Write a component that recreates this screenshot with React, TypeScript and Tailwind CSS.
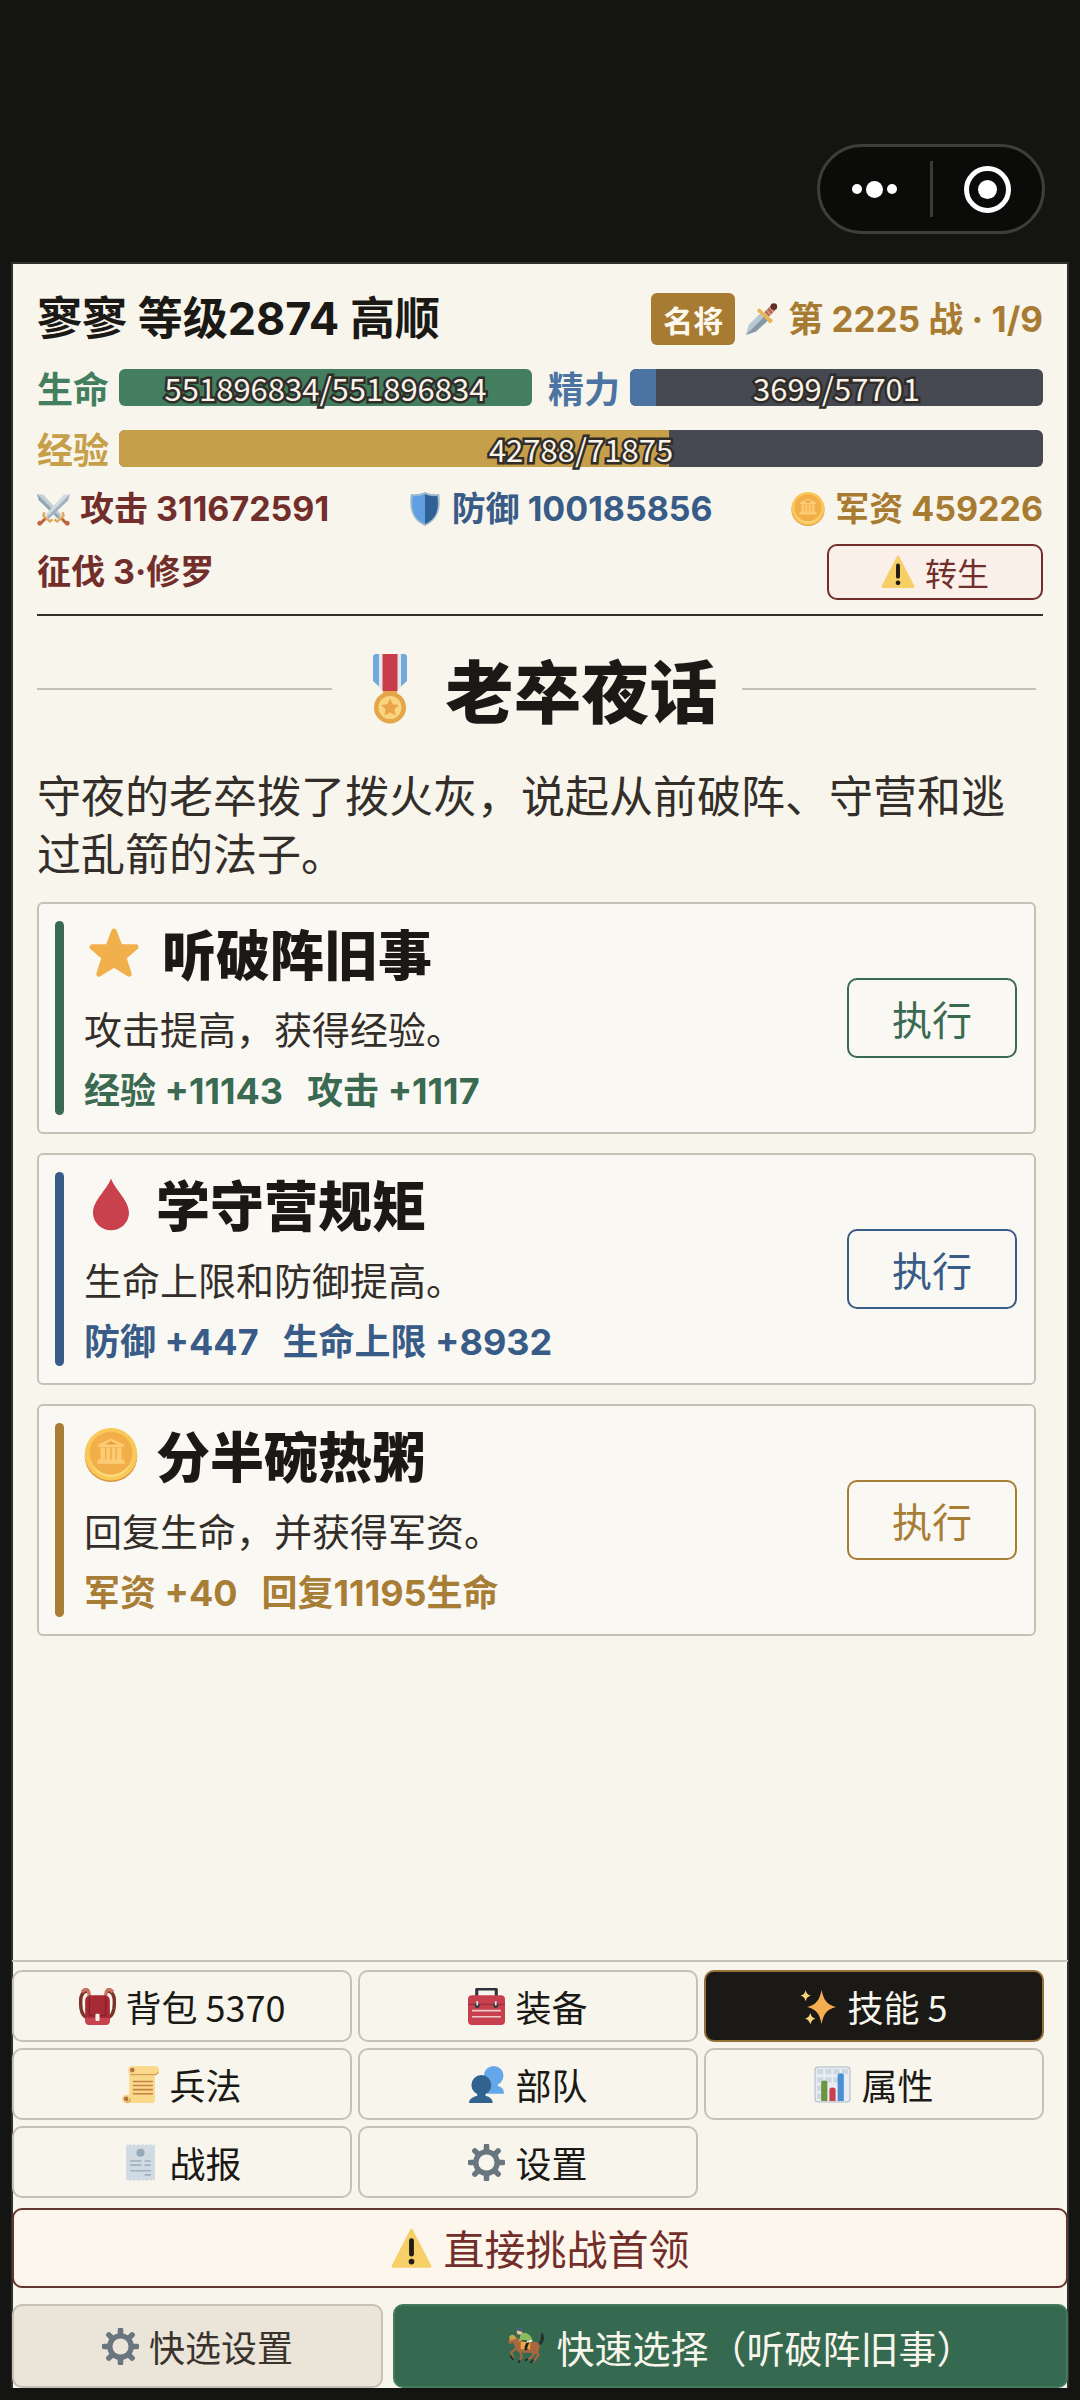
import React from 'react'
import clsx from 'clsx'

type IconProps = { className?: string }

const Svg: React.FC<IconProps & { viewBox?: string; children: React.ReactNode }> = ({
  className,
  viewBox = '0 0 36 36',
  children
}) => (
  <svg viewBox={viewBox} className={clsx('shrink-0', className)} aria-hidden="true">
    {children}
  </svg>
)

const DaggerIcon: React.FC<IconProps> = ({ className }) => (
  <Svg className={className}>
    <path d="M1 35 4 24 17 11l8 8-13 12z" fill="#b9c7d1" />
    <path d="M1 35 21 15l4 4-13 12z" fill="#8698a5" />
    <path d="m21 10 7-7 5 5-7 7z" fill="#b5695a" />
    <path d="m24 8 4 5M27 5l4 5" stroke="#e0a07a" strokeWidth="1.6" />
    <circle cx="31.5" cy="4" r="3.6" fill="#5f2f28" />
    <path d="M14 7c1-2 3-1 4 1l10 9c3 1 3 3 1 4-2 2-3 1-4-1l-9-9c-3-1-3-3-2-4z" fill="#e7b552" />
  </Svg>
)

const SwordsIcon: React.FC<IconProps> = ({ className }) => (
  <Svg className={className}>
    <path d="m0 1 7 1 20 22-4 4L2 8z" fill="#c3ced6" />
    <path d="m0 1 25 25-2 2L2 8z" fill="#93a4b0" />
    <path d="m36 1-7 1L9 24l4 4L34 8z" fill="#d2dbe1" />
    <path d="M36 1 11 26l2 2L34 8z" fill="#a3b2bd" />
    <path d="m26 27 6 6M10 27l-6 6" stroke="#b5643f" strokeWidth="3.4" />
    <path d="m28 21 1 4-7 6-3-2M8 21l-1 4 7 6 3-2" fill="none" stroke="#dfa95a" strokeWidth="2.6" />
    <circle cx="33" cy="33" r="2.6" fill="#c4613f" />
    <circle cx="3" cy="33" r="2.6" fill="#c4613f" />
  </Svg>
)

const ShieldIcon: React.FC<IconProps> = ({ className }) => (
  <Svg className={className}>
    <path d="M18 0c5 2 10 3 15 2 2 14 0 27-15 34C3 29 1 16 3 2c5 1 10 0 15-2z" fill="#9fb9cf" />
    <path d="M18 2C13 4 9 5 5 4c-2 13 0 24 13 30z" fill="#5f9fe2" />
    <path d="M18 2c5 2 9 3 13 2 2 13 0 24-13 30z" fill="#2f6194" />
  </Svg>
)

const CoinIcon: React.FC<IconProps> = ({ className }) => (
  <Svg className={className}>
    <ellipse cx="18" cy="19" rx="17.500" ry="17" fill="#dc9440" />
    <ellipse cx="18" cy="17.500" rx="17.500" ry="17.500" fill="#f9c859" />
    <ellipse cx="18" cy="17.800" rx="14.400" ry="14.800" fill="#fbdc80" />
    <ellipse cx="18" cy="16.800" rx="14.400" ry="14.300" fill="#f2ae49" />
    <path d="m18 7 8.500 4v1.600h-17V11zM11 13h3v8h-3zM15 13h2.400v8H15zM18.600 13H21v8h-2.400zM22 13h3v8h-3zM9.500 21h17l1 2.800h-19z" fill="#fdcb74" />
    <path d="m18 8.600 4 2.400h-8z" fill="#e99f3f" />
  </Svg>
)

const WarningIcon: React.FC<IconProps> = ({ className }) => (
  <Svg className={className}>
    <path d="M16.800 1.600q1.200-2 2.400 0l16 31q1 2.400-1.400 2.400H2.200q-2.400 0-1.400-2.400z" fill="#f6cf67" />
    <rect x="15.900" y="9" width="4.200" height="16" rx="2" fill="#211d16" />
    <circle cx="18" cy="29.500" r="2.500" fill="#211d16" />
  </Svg>
)

const MedalIcon: React.FC<IconProps> = ({ className }) => (
  <Svg className={className} viewBox="0 0 36 72">
    <path d="M4 1h28q3 0 3 3v24L24 38H12L1 28V4q0-3 3-3z" fill="#71a9dc" />
    <path d="M7 1h22v33l-5 4H12l-5-4z" fill="#e5e6ec" />
    <path d="M10.500 1h15v37h-15z" fill="#c83d49" />
    <path d="M11 38h14v7H11z" fill="#e6a548" />
    <circle cx="18" cy="54.500" r="16" fill="#e6a548" />
    <circle cx="18" cy="54.500" r="11.500" fill="#fad581" />
    <path d="m18 45.500 2.700 5.700 6.300.8-4.600 4.300 1.200 6.200-5.600-3-5.600 3 1.200-6.200L9 52l6.300-.8z" fill="#eba449" />
  </Svg>
)

const StarIcon: React.FC<IconProps> = ({ className }) => (
  <Svg className={className}>
    <path
      d="m18 3.500 4 10.500h10.500l-8 7 3.500 11-10-6.200L8 32l3.500-11-8-7H14z"
      fill="#f2b04d"
      stroke="#f2b04d"
      strokeWidth="3.600"
      strokeLinejoin="round"
    />
  </Svg>
)

const DropIcon: React.FC<IconProps> = ({ className }) => (
  <Svg className={className}>
    <path d="M18 1c3 8 12 14.500 12 23A12 11.500 0 0 1 6 24C6 15.500 15 9 18 1z" fill="#c8414d" />
  </Svg>
)

const BackpackIcon: React.FC<IconProps> = ({ className }) => (
  <Svg className={className}>
    <path d="M9 3C1 3 1 12 2 20c1 6 3 8 6 9M27 3c8 0 8 9 7 17-1 6-3 8-6 9" fill="none" stroke="#7b3428" strokeWidth="3.400" />
    <path d="M10 9c0-9-4-9-7-5M26 9c0-9 4-9 7-5" fill="none" stroke="#c87462" strokeWidth="3.400" />
    <rect x="6" y="7" width="24" height="29" rx="5" fill="#a82a35" />
    <path d="M6 29h24v3q0 4-4 4H10q-4 0-4-4z" fill="#c8424e" />
    <path d="M10 9v15q0 3 3 3h10q3 0 3-3V9" fill="none" stroke="#82202b" strokeWidth="1.200" />
    <rect x="16" y="25" width="4" height="7" rx="1" fill="#f3eee9" />
  </Svg>
)

const ToolboxIcon: React.FC<IconProps> = ({ className }) => (
  <Svg className={className}>
    <path d="M8.500 9V2q0-1 1-1h17q1 0 1 1v7" fill="none" stroke="#2c3338" strokeWidth="3" />
    <rect y="7" width="36" height="29" rx="4" fill="#c8404d" />
    <path d="M0 16h36" stroke="#97303c" strokeWidth="1.200" />
    <path d="M4 22h28M4 28h28" stroke="#f0c9cb" strokeWidth="1.600" />
    <circle cx="9" cy="17" r="2.400" fill="#2c3338" />
    <circle cx="27" cy="17" r="2.400" fill="#2c3338" />
    <path d="M9 13v4M27 13v4" stroke="#dfe4e8" strokeWidth="1.800" />
  </Svg>
)

const SparklesIcon: React.FC<IconProps> = ({ className }) => (
  <Svg className={className}>
    <path d="M21 2c2 10 5 14 14 16.500C26 21 23 25 21 35c-2-10-5-14-14-16.500C16 16 19 12 21 2z" fill="#f5ae4f" />
    <path d="M5.500 2c.8 3.400 2 4.600 5 5.500-3 .9-4.200 2-5 5.500C4.700 9.500 3.500 8.400.5 7.500c3-.9 4.200-2.100 5-5.500zM10 24c.8 3.400 2 4.800 5 5.800-3 1-4.200 2.400-5 5.800-.8-3.400-2-4.800-5-5.800 3-1 4.200-2.400 5-5.800z" fill="#f8d37a" />
  </Svg>
)

const ScrollIcon: React.FC<IconProps> = ({ className }) => (
  <Svg className={className}>
    <path d="M6 4q0-4 4-4h22q4 0 4 4t-4 5v24q0 3-3 3H4q-4 0-4-4t4-4h3V8Q6 7 6 4z" fill="#fbd98b" />
    <path d="M8 8.500h24q3-.5 3-3M4 35.500q4 0 4-4" fill="none" stroke="#d89c57" strokeWidth="1.200" />
    <circle cx="10" cy="4" r="2.300" fill="#b4714a" />
    <circle cx="4" cy="32" r="2.300" fill="#b4714a" />
    <path d="M10.500 15H30M10.500 19H30M10.500 23H30M10.500 27H30" stroke="#c57f45" strokeWidth="1.500" />
  </Svg>
)

const PeopleIcon: React.FC<IconProps> = ({ className }) => (
  <Svg className={className}>
    <path d="M21 16h8v3.500c4 1 6 3 6 7.500H18z" fill="#64a6ea" />
    <circle cx="25" cy="9.500" r="9.500" fill="#64a6ea" />
    <circle cx="13" cy="18.500" r="9.700" fill="#32628f" />
    <path d="M9 24h8v5c4 1 7 3 7 7H1c0-4 4-6 8-7z" fill="#32628f" />
  </Svg>
)

const ChartIcon: React.FC<IconProps> = ({ className }) => (
  <Svg className={className}>
    <rect x="1" y="1" width="34" height="34" rx="3" fill="#e7edf2" stroke="#aebac4" />
    <path d="M3 3h6v5H3zM11 3h6v5h-6zM19 3h6v5h-6zM27 3h6v5h-6zM3 11h6v5H3zM11 11h6v5h-6zM19 11h6v5h-6zM3 19h6v5H3zM3 27h6v5H3z" fill="#ccd7e0" />
    <path d="M7 16q0-2 3-2t3 2v18H7z" fill="#6b953f" />
    <path d="M15 23q0-2 3-2t3 2v11h-6z" fill="#c8414f" />
    <path d="M23 9q0-2 3-2t3 2v25h-6z" fill="#4a8fd4" />
  </Svg>
)

const ReceiptIcon: React.FC<IconProps> = ({ className }) => (
  <Svg className={className}>
    <path d="m4 0 2 1.500L8 0l2 1.500L12 0l2 1.500L16 0l2 1.500L20 0l2 1.500L24 0l2 1.500L28 0l2 1.500L32 0v36l-2-1.500-2 1.500-2-1.500-2 1.500-2-1.500-2 1.500-2-1.500-2 1.500-2-1.500-2 1.500-2-1.500L8 36l-2-1.500L4 36z" fill="#cfdae3" />
    <circle cx="18" cy="8.500" r="4" fill="#96a9b8" />
    <path d="M8 16.500h11M22 16.500h6M8 20.500h11M22 20.500h6M8 26h20M22 30h6" stroke="#9fb0be" strokeWidth="1.600" />
  </Svg>
)

const GearIcon: React.FC<IconProps> = ({ className }) => (
  <Svg className={className}>
    <path d="M18 2v32M2 18h32M6.700 6.700l22.600 22.600M29.300 6.700 6.700 29.300" stroke="#69757f" strokeWidth="5.400" strokeLinecap="round" />
    <circle cx="18" cy="18" r="13" fill="#69757f" />
    <circle cx="18" cy="18" r="7.800" className="fill-[var(--hole)]" />
  </Svg>
)

const HorseIcon: React.FC<IconProps> = ({ className }) => (
  <Svg className={className}>
    <path d="M30 15c3-1 1-6 3-10 3 3 3 10-2 12z" fill="#24322a" />
    <path d="M8 9 5 8l-4 5 1 3 4-1c1 3 2 6 4 8 5 3 12 0 17 3l3-3c2-4 1-8-3-9l-10 1z" fill="#a8673f" />
    <path d="m9 20-5 4 2 6M12 22l2 6-2 4M27 23l3 3-5 7M24 23l1 4-5 4" fill="none" stroke="#a8673f" strokeWidth="2" />
    <path d="m3 27 3 4M12 31l-1 3M25 31l-3 3M20 30l-3 2" stroke="#26302a" strokeWidth="1.800" />
    <path d="M2 9c3-3 5-2 7 2l-6 2z" fill="#c9a24c" />
    <path d="M13 14h9v7h-9z" fill="#f0a540" />
    <path d="m17 12 3 2-2 5v3" fill="none" stroke="#1d2320" strokeWidth="2.600" />
    <path d="M13 7c4-3 9-1 11 5l-5 1-4-1-4 2z" fill="#8bbd5c" />
    <path d="m19 13 5-1v2l-6 1z" fill="#eef0e6" />
    <circle cx="12" cy="4.500" r="2.700" fill="#edc79b" />
    <path d="M9 3c0-4 6-4 6 0v2z" fill="#46617c" />
  </Svg>
)

type BarProps = {
  label: string
  value: number
  max: number
  labelClass: string
  fillClass: string
}

const StatBar: React.FC<BarProps> = ({ label, value, max, labelClass, fillClass }) => (
  <div className="flex items-center gap-2.5">
    <span className={clsx('text-[36px] leading-[37px] font-bold whitespace-nowrap', labelClass)}>{label}</span>
    <div className="relative h-[37px] flex-1">
      <div className="h-full overflow-hidden rounded-md bg-[#474952]">
        <div className={clsx('h-full', fillClass)} style={{ width: `${(value / max) * 100}%` }} />
      </div>
      <span className="absolute inset-0 text-center text-[31px] leading-[37px] text-[#f9f3e9] [-webkit-text-stroke:5px_#302d29] [paint-order:stroke_fill]">
        {value}/{max}
      </span>
    </div>
  </div>
)

const events = [
  {
    title: '听破阵旧事',
    desc: '攻击提高，获得经验。',
    rewards: ['经验 +11143', '攻击 +1117'],
    icon: <StarIcon className="h-[54px] w-[60px]" />,
    bar: 'bg-[#3a6a51]',
    text: 'text-[#3a6a51]',
    border: 'border-[#3a6a51]'
  },
  {
    title: '学守营规矩',
    desc: '生命上限和防御提高。',
    rewards: ['防御 +447', '生命上限 +8932'],
    icon: <DropIcon className="size-[54px]" />,
    bar: 'bg-[#385b87]',
    text: 'text-[#385b87]',
    border: 'border-[#385b87]'
  },
  {
    title: '分半碗热粥',
    desc: '回复生命，并获得军资。',
    rewards: ['军资 +40', '回复11195生命'],
    icon: <CoinIcon className="size-[54px]" />,
    bar: 'bg-[#a87d36]',
    text: 'text-[#a87d36]',
    border: 'border-[#a87d36]'
  }
]

const menu = [
  { label: '背包 5370', Icon: BackpackIcon },
  { label: '装备', Icon: ToolboxIcon },
  { label: '技能 5', Icon: SparklesIcon, active: true },
  { label: '兵法', Icon: ScrollIcon },
  { label: '部队', Icon: PeopleIcon },
  { label: '属性', Icon: ChartIcon },
  { label: '战报', Icon: ReceiptIcon },
  { label: '设置', Icon: GearIcon }
]

export default function App() {
  return (
    <div className="flex min-h-screen flex-col bg-[#141412] px-[11px] pb-3 font-['Noto_Sans_CJK_SC',sans-serif] text-[#1a1916] [--hole:#f8f5ec]">
      {/* Mini program capsule */}
      <div className="flex justify-end pt-36 pr-6 pb-7">
        <div className="flex h-[90px] w-[228px] items-center rounded-full border-3 border-[#3d3d3b] bg-[#0b0b0a]">
          <button type="button" aria-label="更多" className="flex h-full flex-1 items-center justify-center gap-1">
            <span className="size-2.5 rounded-full bg-white" />
            <span className="size-[17px] rounded-full bg-white" />
            <span className="size-2.5 rounded-full bg-white" />
          </button>
          <span className="h-14 w-[3px] bg-[#3a3a39]" />
          <button type="button" aria-label="关闭" className="flex h-full flex-1 items-center justify-center">
            <span className="flex size-[47px] items-center justify-center rounded-full border-5 border-white">
              <span className="size-[19px] rounded-full bg-white" />
            </span>
          </button>
        </div>
      </div>

      <div className="flex flex-1 flex-col border-2 border-b-0 border-[#33302c] bg-[#f8f5ec]">
        <header className="mx-6 border-b-2 border-[#33302c] pt-[29px] pb-3.5">
          <div className="flex items-center justify-between">
            <h1 className="font-['Inter','Noto_Sans_CJK_SC',sans-serif] text-[45px] leading-[52px] font-bold">寥寥 等级2874 高顺</h1>
            <div className="flex items-center text-[#a87b32]">
              <span className="rounded-md bg-[#a87b32] px-3 text-[30px] leading-[52px] font-bold text-[#fdf8ee]">名将</span>
              <DaggerIcon className="ml-2.5 size-[33px]" />
              <span className="ml-2.5 font-['Inter','Noto_Sans_CJK_SC',sans-serif] text-[35px] leading-[52px] font-bold">第 2225 战 · 1/9</span>
            </div>
          </div>

          <div className="mt-6 grid grid-cols-2 gap-4">
            <StatBar label="生命" value={551896834} max={551896834} labelClass="text-[#437f5f]" fillClass="bg-[#437f5f]" />
            <StatBar label="精力" value={3699} max={57701} labelClass="text-[#4b74a3]" fillClass="bg-[#4b74a3]" />
          </div>
          <div className="mt-6">
            <StatBar label="经验" value={42788} max={71875} labelClass="text-[#c69f4a]" fillClass="bg-[#c69f4a]" />
          </div>

          <div className="mt-[18px] flex justify-between font-['Inter','Noto_Sans_CJK_SC',sans-serif] text-[34px] leading-[48px] font-bold">
            <span className="flex items-center gap-2.5 text-[#712e2b]">
              <SwordsIcon className="size-[33px]" />
              攻击 311672591
            </span>
            <span className="flex items-center gap-2.5 text-[#385b87]">
              <ShieldIcon className="size-[34px]" />
              防御 100185856
            </span>
            <span className="flex items-center gap-2.5 text-[#a87b32]">
              <CoinIcon className="size-[34px]" />
              军资 459226
            </span>
          </div>

          <div className="mt-[11px] flex items-center justify-between">
            <span className="font-['Inter','Noto_Sans_CJK_SC',sans-serif] text-[34px] leading-[48px] font-bold text-[#712e2b]">征伐 3·修罗</span>
            <button
              type="button"
              className="flex h-14 w-[216px] items-center justify-center gap-2.5 rounded-[10px] border-2 border-[#712e2b] bg-[#fbefe9] text-[32px] text-[#712e2b]"
            >
              <WarningIcon className="size-[34px]" />
              转生
            </button>
          </div>
        </header>

        <main className="flex-1 pr-[31px] pl-6">
          <div className="mt-[25px] flex items-center gap-6">
            <span className="h-0.5 flex-1 bg-[#c4c0b6]" />
            <h2 className="flex items-center gap-[38px] pl-4 text-[68px] leading-[96px] font-black">
              <MedalIcon className="h-[72px] w-9" />
              老卒夜话
            </h2>
            <span className="h-0.5 flex-1 bg-[#c4c0b6]" />
          </div>

          <p className="mt-7 text-[44px] leading-[58px] text-[#332e29]">
            守夜的老卒拨了拨火灰，说起从前破阵、守营和逃过乱箭的法子。
          </p>

          <div className="mt-[21px] space-y-[19px]">
            {events.map(event => (
              <section key={event.title} className="flex items-center rounded-md border-2 border-[#c6c1b6] bg-[#faf8f3] py-[17px] pr-[17px] pl-4">
                <span className={clsx('mr-5 w-[9px] self-stretch rounded-full', event.bar)} />
                <div className="flex-1">
                  <h3 className="flex items-center gap-[18px] text-[54px] leading-[64px] font-black">
                    {event.icon}
                    {event.title}
                  </h3>
                  <p className="mt-4 text-[38px] leading-[54px] text-[#332e29]">{event.desc}</p>
                  <p className={clsx("mt-3 flex gap-6 font-['Inter','Noto_Sans_CJK_SC',sans-serif] text-[36px] leading-[48px] font-bold", event.text)}>
                    {event.rewards.map(reward => (
                      <span key={reward}>{reward}</span>
                    ))}
                  </p>
                </div>
                <button
                  type="button"
                  className={clsx('h-20 w-[170px] rounded-[10px] border-2 text-[40px]', event.text, event.border)}
                >
                  执行
                </button>
              </section>
            ))}
          </div>
        </main>

        <footer className="-mx-px">
          <nav className="grid grid-cols-3 gap-1.5 border-t-2 border-[#c6c1b6] pt-2 pr-6">
            {menu.map(({ label, Icon, active }) => (
              <button
                key={label}
                type="button"
                className={clsx(
                  'flex h-[72px] items-center justify-center gap-2.5 rounded-[10px] border-2 text-[36px]',
                  active ? 'border-[#94703a] bg-[#1a1916] text-[#f8f5ec]' : 'border-[#c6c1b6] text-[#1a1916]'
                )}
              >
                <Icon className="size-[37px]" />
                {label}
              </button>
            ))}
          </nav>

          <button
            type="button"
            className="mt-2.5 flex h-20 w-full items-center justify-center gap-3 rounded-[10px] border-2 border-[#65352f] bg-[#fdf6ec] text-[41px] text-[#712e2b]"
          >
            <WarningIcon className="size-[41px]" />
            直接挑战首领
          </button>

          <div className="mt-4 grid grid-cols-[11fr_20fr] gap-2.5">
            <button
              type="button"
              className="flex h-[84px] items-center justify-center gap-2.5 rounded-[10px] border-2 border-[#c6c1b6] bg-[#eae4d9] text-[36px] text-[#3a332d] [--hole:#eae4d9]"
            >
              <GearIcon className="size-[37px]" />
              快选设置
            </button>
            <button
              type="button"
              className="flex h-[84px] items-center justify-center gap-3 rounded-[10px] border-2 border-[#447a5c] bg-[#366a50] pl-5 text-[38px] text-[#f8f5ec]"
            >
              <HorseIcon className="size-[38px]" />
              快速选择（听破阵旧事）
            </button>
          </div>
        </footer>
      </div>
    </div>
  )
}
